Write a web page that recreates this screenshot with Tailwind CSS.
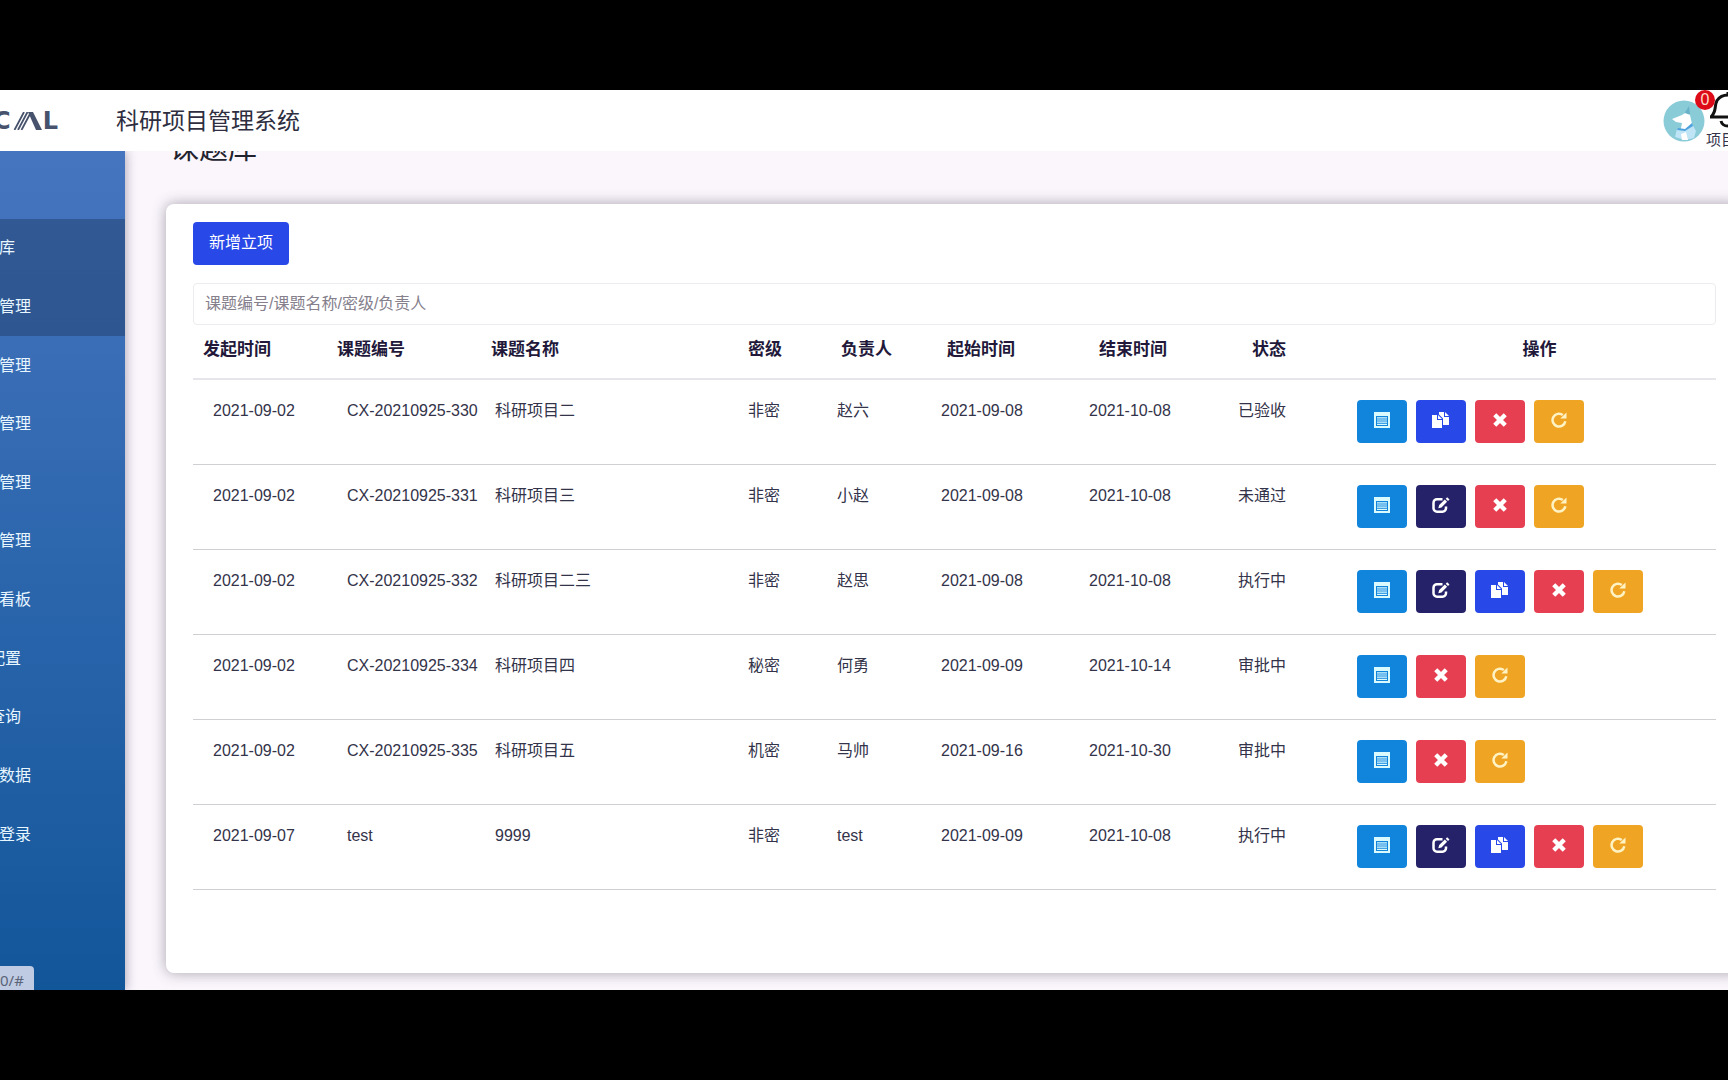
<!DOCTYPE html>
<html lang="zh-CN">
<head>
<meta charset="utf-8">
<title>科研项目管理系统</title>
<script src="https://cdn.jsdelivr.net/npm/@tailwindcss/browser@4"></script>
</head>
<body class="h-screen overflow-hidden bg-black py-[90px] font-['Liberation_Sans','Noto_Sans_CJK_SC',sans-serif] text-base text-[#33334a]">
<svg class="hidden" aria-hidden="true">
  <symbol id="list" viewBox="0 0 16 16"><path fill="currentColor" fill-rule="evenodd" d="M0 0h16v16H0zM2 4v10h12V4z"/><path stroke="currentColor" stroke-width="1.2" d="M3 5.8h10M3 8h10M3 10.2h10M3 12.4h10"/></symbol>
  <symbol id="copy" viewBox="0 0 18 16"><path fill="currentColor" d="M0 3h5v5h5v8H0z"/><path fill="currentColor" d="M6 3l4 4H6z"/><path fill="currentColor" d="M7 0h5v5h5v8h-6V6.500L7 2.500z"/><path fill="currentColor" d="M13 0l4 4h-4z"/></symbol>
  <symbol id="remove" viewBox="0 0 16 16"><path stroke="currentColor" stroke-width="5" d="M2 2l12 12M14 2L2 14"/></symbol>
  <symbol id="repeat" viewBox="0 0 16 16"><path fill="none" stroke="currentColor" stroke-width="2.500" d="M14.300 9.200A6.400 6.400 0 1 1 11.800 3"/><path fill="currentColor" d="M15.500.4v6.200H9.300z"/></symbol>
  <symbol id="edit" viewBox="0 0 18 16"><path fill="none" stroke="currentColor" stroke-width="2.500" d="M10.500 2.200H5A3.500 3.500 0 0 0 1.500 5.700v5.500A3.500 3.500 0 0 0 5 14.700h5.500a3.500 3.500 0 0 0 3.500-3.500V9.500"/><path fill="currentColor" d="M6.300 11.300l.9-3.200 5.600-5.600 2.300 2.300-5.600 5.600zM13.700 1.700L15.200.2l2.300 2.300L16 4z"/></symbol>
</svg>
<div class="flex h-full flex-col overflow-hidden">
  <header class="relative z-10 flex h-[61px] shrink-0 items-center justify-between bg-white">
    <div class="flex items-center">
      <div class="flex h-[26px] w-[58px] items-center justify-end overflow-hidden font-['DejaVu_Sans'] text-2xl font-bold text-[#47526c]" aria-label="logo">
        <span>C</span>
        <svg class="mr-px ml-0.5 h-[18px] w-[29px] shrink-0" viewBox="0 0 29 18"><path fill="none" stroke="currentColor" stroke-width="1.800" d="M1.500 18L11 0M5 18l9.500-18M8.500 18L17 2"/><path fill="currentColor" d="M15 0h5l9 18h-6z"/></svg>
        <span>L</span>
      </div>
      <h1 class="ml-[58px] text-[23px] leading-8 text-[#2e2e40]">科研项目管理系统</h1>
    </div>
    <div class="relative -mr-5 flex h-full items-center">
      <svg class="mt-px mr-px h-[42px] w-[42px]" viewBox="0 0 42 42" role="img" aria-label="头像"><circle cx="21" cy="21" r="20.500" fill="#8acbd8"/><path fill="#69b2c8" d="M21 14l5-8 1 8z"/><path fill="#fff" d="M9 19l10-4 3-2 5 2 2 9-4 6-8 3 2-10-6-1z"/><path fill="#bfe4f6" d="M14 29l8 1 7-6 4 7-2 7-9 2-10-3z"/><path fill="#4fa3dd" d="M15 28l7 1 7-6 1 3-8 5-8-1z"/><path fill="#fff" d="M18 34l5-2 2 8h-6z"/></svg>
      <a href="#" class="flex h-full flex-col items-start text-black">
        <svg class="ml-0.5 h-[42px] w-[40px]" viewBox="0 0 40 42" fill="none" stroke="#111" stroke-width="3"><path d="M2 27h36M3 27C9 21 6 16 9 10.500 12 6 16 5 20 5s8 1 11 5.500C34 16 31 21 37 27M20 5V2M13 31c1 4 3 5 7 5s6-1 7-5"/></svg>
        <span class="text-[15px] leading-[15px] text-[#33334a]">项目</span>
      </a>
      <span class="absolute top-0 left-[32px] flex h-5 w-5 items-center justify-center rounded-full bg-[#dd0a18] text-base text-[#ffd9c8]">0</span>
    </div>
  </header>
  <div class="flex min-h-0 flex-1">
    <aside class="relative z-[1] w-[125px] shrink-0 bg-linear-to-b from-[#4675bf] via-[#2b66ad] to-[#12569a] pt-[68px] shadow-[1px_0_10px_rgba(60,50,80,0.4)]">
      <nav class="grid h-[645px] auto-rows-fr leading-6 whitespace-nowrap text-[#e8f6ff]">
        <a href="#" class="flex items-center bg-[#264878]/60"><span class="flex w-[15px] justify-end overflow-hidden">库</span></a>
        <a href="#" class="flex items-center bg-[#264878]/60"><span class="flex w-[31px] justify-end overflow-hidden">管理</span></a>
        <a href="#" class="flex items-center"><span class="flex w-[31px] justify-end overflow-hidden">管理</span></a>
        <a href="#" class="flex items-center"><span class="flex w-[31px] justify-end overflow-hidden">管理</span></a>
        <a href="#" class="flex items-center"><span class="flex w-[31px] justify-end overflow-hidden">管理</span></a>
        <a href="#" class="flex items-center"><span class="flex w-[31px] justify-end overflow-hidden">管理</span></a>
        <a href="#" class="flex items-center"><span class="flex w-[31px] justify-end overflow-hidden">看板</span></a>
        <a href="#" class="flex items-center"><span class="flex w-[21px] justify-end overflow-hidden">配置</span></a>
        <a href="#" class="flex items-center"><span class="flex w-[21px] justify-end overflow-hidden">查询</span></a>
        <a href="#" class="flex items-center"><span class="flex w-[31px] justify-end overflow-hidden">数据</span></a>
        <a href="#" class="flex items-center"><span class="flex w-[31px] justify-end overflow-hidden">登录</span></a>
      </nav>
      <div class="absolute bottom-0 left-0 flex h-6 w-[34px] items-center rounded-tr bg-[#bfcbe3] pt-1 font-['Noto_Sans'] text-[15px] text-[#5a6478]">0/#</div>
    </aside>
    <main class="min-w-0 flex-1 overflow-hidden bg-[#faf6fc] pl-[41px]">
      <h2 class="-mt-5 ml-1 text-[29px] leading-9 text-[#22222e]">课题库</h2>
      <section class="mt-[37px] -mr-3.5 h-[769px] rounded-lg bg-white pt-[18px] pr-[26px] pl-[27px] shadow-[0_0_14px_rgba(70,60,80,0.45)]">
        <button class="block h-[43px] w-24 rounded bg-[#2948e8] pb-0.5 text-white">新增立项</button>
        <input type="text" aria-label="搜索" placeholder="课题编号/课题名称/密级/负责人" class="mt-[18px] block h-[42px] w-full rounded border border-[#ececf0] px-[11px] placeholder:text-[#85808c]">
        <table class="w-full table-fixed text-left">
          <colgroup><col class="w-[134px]"><col class="w-[148px]"><col class="w-[253px]"><col class="w-[89px]"><col class="w-[104px]"><col class="w-[148px]"><col class="w-[149px]"><col class="w-[119px]"><col></colgroup>
          <thead>
            <tr class="h-[54px] border-b-2 border-[#e6e6ea] align-top text-[17px] leading-6 whitespace-nowrap text-[#22183a]">
              <th class="pt-[13px] pl-2.5">发起时间</th><th class="pt-[13px] pl-2.5">课题编号</th><th class="pt-[13px] pl-4">课题名称</th><th class="pt-[13px] pl-5">密级</th><th class="pt-[13px] pl-6">负责人</th><th class="pt-[13px] pl-[26px]">起始时间</th><th class="pt-[13px] pl-[30px]">结束时间</th><th class="pt-[13px] pl-[34px]">状态</th><th class="pt-[13px] pl-[26px] text-center">操作</th>
            </tr>
          </thead>
          <tbody id="rows"></tbody>
        </table>
      </section>
    </main>
  </div>
</div>
<script>
const kinds = {
  list: ['bg-[#1184dc] text-[#d9fbff]', '详情', 'h-4 w-4'],
  edit: ['bg-[#26226a] text-white', '编辑', 'h-4 w-[18px]'],
  copy: ['bg-[#2948e8] text-white', '复制', 'h-4 w-[18px]'],
  remove: ['bg-[#e63f52] text-white', '删除', 'h-3.5 w-3.5'],
  repeat: ['bg-[#efa424] text-[#fff3c4]', '刷新', 'h-4 w-4']
};
const data = [
  ['2021-09-02','CX-20210925-330','科研项目二','非密','赵六','2021-09-08','2021-10-08','已验收','list copy remove repeat'],
  ['2021-09-02','CX-20210925-331','科研项目三','非密','小赵','2021-09-08','2021-10-08','未通过','list edit remove repeat'],
  ['2021-09-02','CX-20210925-332','科研项目二三','非密','赵思','2021-09-08','2021-10-08','执行中','list edit copy remove repeat'],
  ['2021-09-02','CX-20210925-334','科研项目四','秘密','何勇','2021-09-09','2021-10-14','审批中','list remove repeat'],
  ['2021-09-02','CX-20210925-335','科研项目五','机密','马帅','2021-09-16','2021-10-30','审批中','list remove repeat'],
  ['2021-09-07','test','9999','非密','test','2021-09-09','2021-10-08','执行中','list edit copy remove repeat']
];
document.getElementById('rows').innerHTML = data.map(r => `<tr class="h-[85px] border-b border-[#d0d0d4] align-top leading-6 whitespace-nowrap">` +
  r.slice(0, 8).map(c => `<td class="pt-[19px] pl-5">${c}</td>`).join('') +
  `<td class="pt-5 pl-5"><div class="flex gap-[9px]">` +
  r[8].split(' ').map(k => `<button aria-label="${kinds[k][1]}" class="flex h-[43px] w-[50px] items-center justify-center rounded pb-[3px] ${kinds[k][0]}"><svg class="${kinds[k][2]}"><use href="#${k}"/></svg></button>`).join('') +
  `</div></td></tr>`).join('');
</script>
</body>
</html>
